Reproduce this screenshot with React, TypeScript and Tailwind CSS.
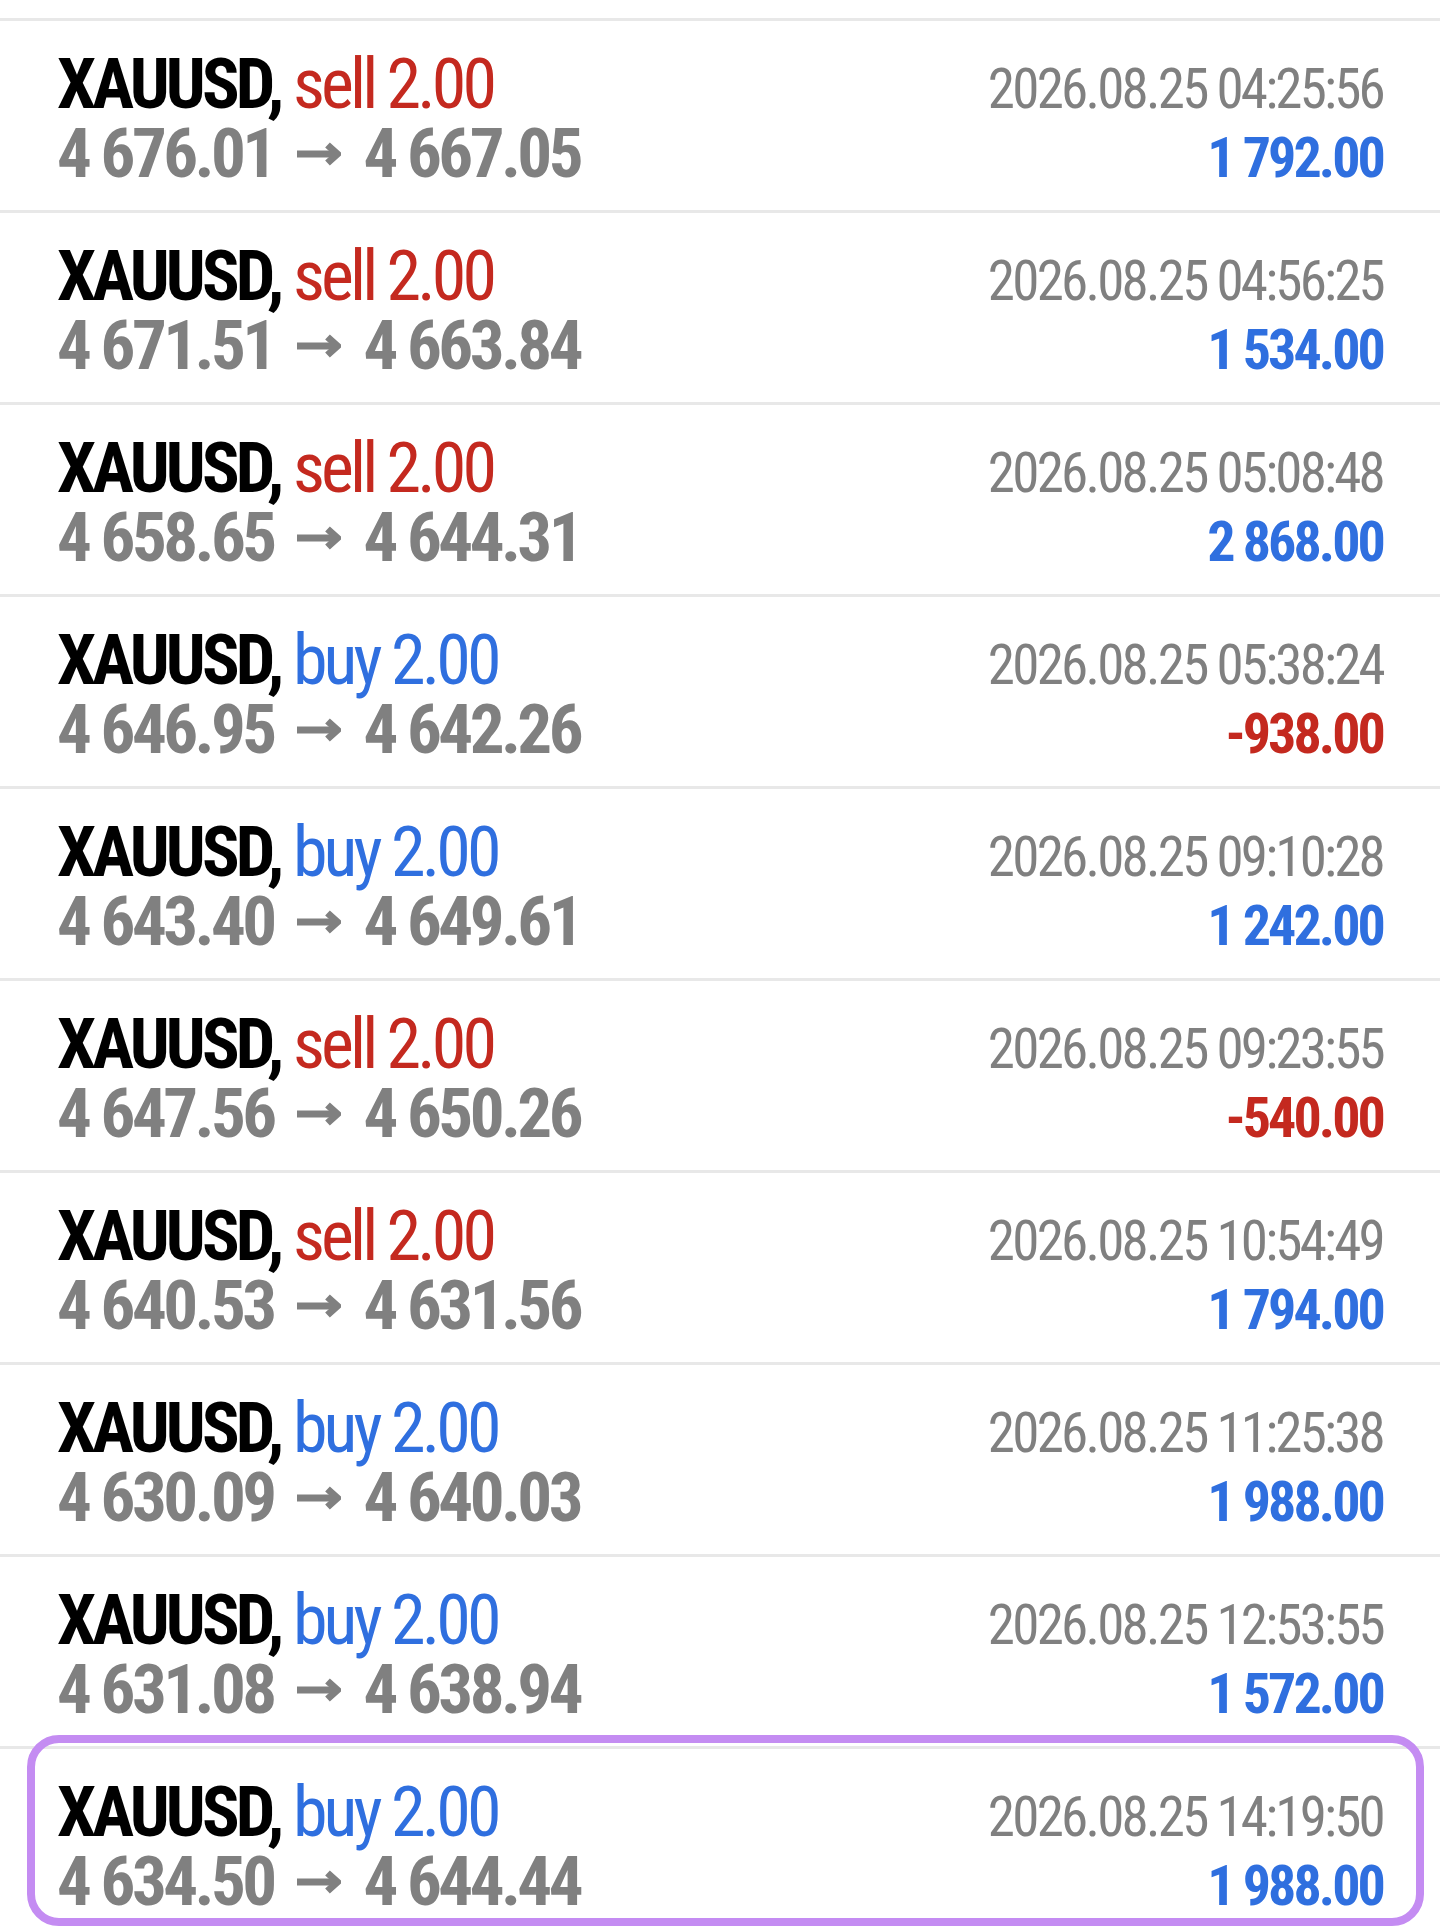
import React from 'react';

type Deal = {
  side: 'buy' | 'sell';
  open: string;
  close: string;
  time: string;
  profit: string;
};

const deals: Deal[] = [
  { side: 'sell', open: '4 676.01', close: '4 667.05', time: '2026.08.25 04:25:56', profit: '1 792.00' },
  { side: 'sell', open: '4 671.51', close: '4 663.84', time: '2026.08.25 04:56:25', profit: '1 534.00' },
  { side: 'sell', open: '4 658.65', close: '4 644.31', time: '2026.08.25 05:08:48', profit: '2 868.00' },
  { side: 'buy', open: '4 646.95', close: '4 642.26', time: '2026.08.25 05:38:24', profit: '-938.00' },
  { side: 'buy', open: '4 643.40', close: '4 649.61', time: '2026.08.25 09:10:28', profit: '1 242.00' },
  { side: 'sell', open: '4 647.56', close: '4 650.26', time: '2026.08.25 09:23:55', profit: '-540.00' },
  { side: 'sell', open: '4 640.53', close: '4 631.56', time: '2026.08.25 10:54:49', profit: '1 794.00' },
  { side: 'buy', open: '4 630.09', close: '4 640.03', time: '2026.08.25 11:25:38', profit: '1 988.00' },
  { side: 'buy', open: '4 631.08', close: '4 638.94', time: '2026.08.25 12:53:55', profit: '1 572.00' },
  { side: 'buy', open: '4 634.50', close: '4 644.44', time: '2026.08.25 14:19:50', profit: '1 988.00' },
];

// bold arrow between open and close price
function Arrow() {
  return (
    <svg
      className="ml-[24px] mr-[22px] inline-block h-[24px] w-[44px] align-[11px]"
      viewBox="0 0 44 24"
      fill="none"
      stroke="#808080"
      strokeWidth={7}
    >
      <path d="M0 12H39" />
      <path d="M30.5 3L40.5 12L30.5 21" strokeLinejoin="miter" />
    </svg>
  );
}

function DealRow({ deal, highlighted }: { deal: Deal; highlighted?: boolean }) {
  const loss = deal.profit.startsWith('-');
  return (
    <div className="relative border-t-[3px] border-[#e8e8e8] px-[57px] pt-[29px] pb-[22px]">
      {/* symbol, side, volume / close time */}
      <div className="flex h-[69px] items-baseline justify-between leading-[69px]">
        <div className="text-[70px] tracking-[-0.055em]">
          <span className="font-bold text-black">XAUUSD,</span>{' '}
          <span className={deal.side === 'sell' ? 'text-[#c4291f]' : 'text-[#2f6fdf]'}>
            {deal.side} 2.00
          </span>
        </div>
        <div className="text-[55px] tracking-[-0.05em] text-[#808080]">{deal.time}</div>
      </div>
      {/* prices / profit */}
      <div className="flex h-[69px] items-baseline justify-between leading-[69px]">
        <div className="text-[69px] font-bold tracking-[-0.052em] text-[#808080]">
          {deal.open}
          <Arrow />
          {deal.close}
        </div>
        <div
          className={`text-[56px] font-bold tracking-[-0.052em] ${loss ? 'text-[#c4291f]' : 'text-[#2f6fdf]'}`}
        >
          {deal.profit}
        </div>
      </div>
      {highlighted && (
        <div className="pointer-events-none absolute -top-[14px] bottom-[12px] left-[27px] right-[16px] rounded-[32px] border-[8px] border-[#c48cf2]" />
      )}
    </div>
  );
}

export default function App() {
  return (
    <div
      className="min-h-screen bg-white pt-[18px] font-stretch-condensed"
      style={{ fontFamily: 'Roboto, "Liberation Sans", sans-serif' }}
    >
      {deals.map((d, i) => (
        <DealRow key={i} deal={d} highlighted={i === deals.length - 1} />
      ))}
    </div>
  );
}
